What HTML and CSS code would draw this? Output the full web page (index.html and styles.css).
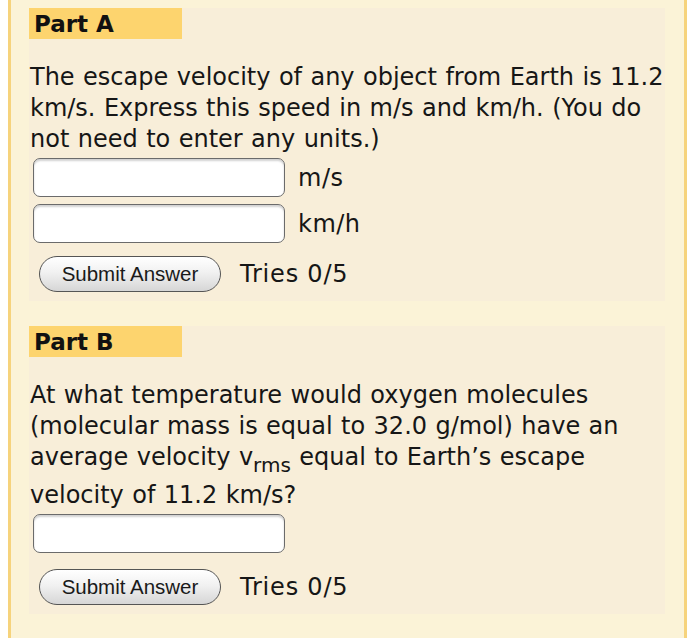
FILE: index.html
```html
<!DOCTYPE html>
<html>
<head>
    <meta charset="UTF-8">
    <title>Escape Velocity</title>
    <link rel="stylesheet" href="styles.css">
</head>
<body>
    <div class="problem">
        <!-- Part A -->
        <div class="part">
            <div class="part-label">Part A</div>
            <p class="question">The escape velocity of any object from Earth is 11.2 km/s. Express this speed in m/s and km/h. (You do not need to enter any units.)</p>
            <div class="answer-row">
                <input type="text" class="answer-box">
                <span class="unit">m/s</span>
            </div>
            <div class="answer-row">
                <input type="text" class="answer-box">
                <span class="unit">km/h</span>
            </div>
            <div class="submit-row">
                <button class="submit-btn">Submit Answer</button>
                <span class="tries">Tries 0/5</span>
            </div>
        </div>

        <!-- Part B -->
        <div class="part">
            <div class="part-label">Part B</div>
            <p class="question">At what temperature would oxygen molecules (molecular mass is equal to 32.0 g/mol) have an average velocity v<sub>rms</sub> equal to Earth’s escape velocity of 11.2 km/s?</p>
            <div class="answer-row single">
                <input type="text" class="answer-box">
            </div>
            <div class="submit-row">
                <button class="submit-btn">Submit Answer</button>
                <span class="tries">Tries 0/5</span>
            </div>
        </div>
    </div>
</body>
</html>
```

FILE: styles.css
```css
body {
    margin: 0;
    background-color: #ffffff;
    font-family: Verdana, 'DejaVu Sans', sans-serif;
    color: #161616;
}
.problem {
    margin-left: 8px;
    width: 679px;
    height: 638px;
    box-sizing: border-box;
    padding: 8px 19px 0 18px;
    background-color: #fbf3d7;
    border-left: 3px solid #f6d37c;
    border-right: 3px solid #f6d37c;
}
.part {
    background-color: #f8eed9;
    margin-bottom: 25px;
}
.part-label {
    width: 153px;
    height: 31px;
    box-sizing: border-box;
    padding-left: 5px;
    background-color: #fdd46e;
    font-size: 23px;
    font-weight: bold;
    line-height: 32px;
    color: #111;
}
.question {
    margin: 23px 0 3px 1px;
    font-size: 24px;
    line-height: 31px;
    word-spacing: 0.8px;
}
.question sub {
    font-size: 20px;
    line-height: 30px;
    vertical-align: -7px;
}
.answer-row {
    display: flex;
    align-items: center;
    margin-bottom: 7px;
    padding-left: 4px;
}
.answer-row.single {
    margin-bottom: 10px;
}
.answer-box {
    width: 252px;
    height: 39px;
    box-sizing: border-box;
    margin: 0;
    border: 1.5px solid #6b6b6b;
    border-radius: 7px;
    background: #ffffff;
    box-shadow: inset 0 2px 2px rgba(0,0,0,0.18);
}
.unit {
    margin-left: 13px;
    font-size: 24px;
    letter-spacing: 0.5px;
}
.submit-row {
    display: flex;
    align-items: center;
    padding: 6px 0 9px 10px;
}
.submit-btn {
    width: 182px;
    height: 36px;
    border: 1.5px solid #555;
    border-radius: 18px;
    background: linear-gradient(#ffffff, #f1f1f1 45%, #d6d6d6);
    font-family: 'Liberation Sans', Arial, sans-serif;
    font-size: 20.5px;
    color: #1a1a1a;
    padding: 0;
}
.tries {
    margin-left: 19px;
    font-size: 24px;
    letter-spacing: 0.8px;
}
```
